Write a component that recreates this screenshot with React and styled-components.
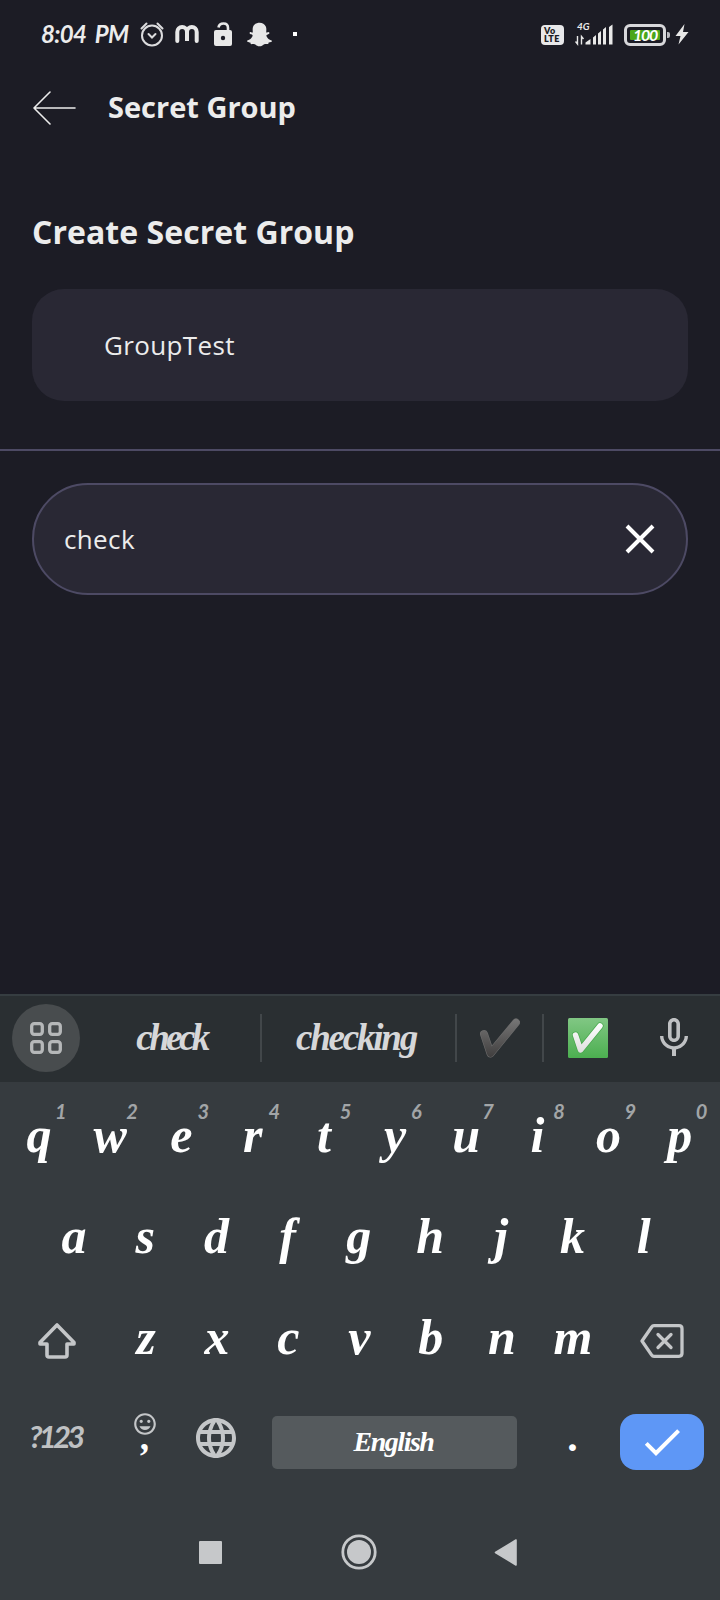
import React from "react";
import styled, { createGlobalStyle } from "styled-components";
import { FaSnapchatGhost } from "react-icons/fa";
import { MdMicNone, MdLanguage, MdTagFaces, MdCheck } from "react-icons/md";

const GlobalStyle = createGlobalStyle`
  * { box-sizing: border-box; }
  body { margin: 0; background: #1c1c25; }
`;

const script = `"Liberation Serif", serif`;
const slanted = `Lato, "Liberation Sans", sans-serif`;

const Screen = styled.div`
  width: 720px;
  height: 1600px;
  display: flex;
  flex-direction: column;
  overflow: hidden;
  background: #1c1c25;
  color: #ececec;
  font-family: "Open Sans", "Noto Sans", sans-serif;
  svg { display: block; flex: none; }
`;

const StatusBar = styled.header`
  height: 68px;
  padding: 0 31px 0 41px;
  display: flex;
  align-items: center;
  justify-content: space-between;
`;

const StatusGroup = styled.div`
  display: flex;
  align-items: center;
  gap: ${(p) => p.$gap}px;
`;

const Clock = styled.span`
  width: 84px;
  padding-bottom: 1px;
  font: italic 700 24px/30px ${slanted};
  letter-spacing: -0.7px;
  word-spacing: 4px;
  white-space: nowrap;
`;

const AppLogo = styled.span`
  margin-left: -4px;
`;

const Dot = styled.i`
  width: 4px;
  height: 4px;
  margin-left: 6px;
  background: #fff;
`;

const Volte = styled.div`
  width: 23px;
  height: 20px;
  margin-top: 2px;
  padding: 2px 0 0 3px;
  border-radius: 4px;
  background: #e8e8ea;
  color: #1c1c25;
  font: 800 9px/9px Lato, sans-serif;
  letter-spacing: 0.4px;
`;

const VolteLine = styled.span`
  display: block;
  height: 8px;
  line-height: 8px;
`;

const Signal = styled.div`
  position: relative;
  width: 38px;
  height: 24px;
`;

const Network = styled.span`
  position: absolute;
  left: 2px;
  top: -1px;
  font: italic 700 10px/10px ${slanted};
`;

const Battery = styled.div`
  display: flex;
  align-items: center;
  margin-top: 2px;
`;

const BatteryCase = styled.div`
  width: 42px;
  height: 22px;
  padding: 3px;
  border: 3px solid #d8d8db;
  border-radius: 6px;
`;

const BatteryLevel = styled.div`
  height: 10px;
  display: flex;
  align-items: center;
  justify-content: center;
  border-radius: 1px;
  background: #4aa61a;
  color: #fff;
  font: italic 700 16px/10px ${slanted};
  letter-spacing: -1.2px;
`;

const BatteryTip = styled.i`
  width: 3px;
  height: 6px;
  margin-left: 1px;
  border-radius: 0 2px 2px 0;
  background: #bbbbc0;
`;

const TitleBar = styled.div`
  height: 80px;
  padding-left: 33px;
  display: flex;
  align-items: center;
  gap: 32px;
`;

const Title = styled.h1`
  margin: 0;
  padding-bottom: 2px;
  font-size: 29px;
  line-height: 40px;
  font-weight: 700;
`;

const Form = styled.main`
  flex: 1;
`;

const Heading = styled.h2`
  margin: 60px 32px 33px;
  font-size: 32px;
  line-height: 48px;
  font-weight: 700;
  letter-spacing: 0.04px;
`;

const Field = styled.div`
  height: 112px;
  margin: 0 32px;
  padding: 0 ${(p) => (p.$outlined ? 31 : 0)}px 0 ${(p) => (p.$outlined ? 30 : 72)}px;
  display: flex;
  align-items: center;
  justify-content: space-between;
  border: ${(p) => (p.$outlined ? "2px solid #4d4a64" : "0")};
  border-radius: ${(p) => (p.$outlined ? 56 : 32)}px;
  background: #292834;
  font-size: 26px;
  letter-spacing: 0.36px;
`;

const FieldText = styled.span`
  white-space: nowrap;
`;

const Divider = styled.hr`
  height: 2px;
  margin: 48px 0 32px;
  border: 0;
  background: #4d4a64;
`;

const Keyboard = styled.section`
  height: 606px;
  border-top: 2px solid #363d41;
  background: #363b3f;
`;

const Strip = styled.div`
  height: 86px;
  padding: 0 4px 2px 12px;
  display: flex;
  align-items: center;
  background: #2a2f32;
`;

const MenuButton = styled.button`
  width: 68px;
  height: 68px;
  margin: 0 6px 0 0;
  padding: 0;
  display: grid;
  place-items: center;
  border: 0;
  border-radius: 50%;
  background: #484c4e;
`;

const Suggestion = styled.div`
  width: ${(p) => p.$width}px;
  height: 48px;
  padding-right: ${(p) => p.$nudge}px;
  display: flex;
  align-items: center;
  justify-content: center;
  border-right: 2px solid #42474a;
  color: #d6d7d9;
  font: italic 700 37px/48px ${script};
  letter-spacing: ${(p) => p.$tracking}px;
`;

const IconSlot = styled.div`
  width: ${(p) => p.$width}px;
  height: 48px;
  display: grid;
  place-items: center;
  border-right: ${(p) => (p.$divided ? 2 : 0)}px solid #42474a;
`;

const Keys = styled.div`
  padding-top: 6px;
`;

const KeyRow = styled.div`
  height: 101px;
  padding: 0 ${(p) => p.$inset || 4}px;
  display: flex;
  align-items: center;
`;

const Key = styled.div`
  position: relative;
  width: ${(p) => p.$width || 71.2}px;
  height: 101px;
  padding: ${(p) => (p.$icon ? "0 1px 0 0" : "0 1px 8px 0")};
  display: flex;
  flex-direction: column;
  align-items: center;
  justify-content: center;
  color: #fff;
  font: italic 700 50px/60px ${script};
`;

const Hint = styled.sup`
  position: absolute;
  left: 51px;
  top: 11px;
  color: #a2a5a7;
  font: italic 700 20px/24px ${slanted};
`;

const SymbolsKey = styled.div`
  width: 108px;
  padding: 0 0 11px 25px;
  color: #bfc1c3;
  font: italic 700 31px/40px ${slanted};
  letter-spacing: -3.7px;
`;

const CommaKey = styled.div`
  width: 66px;
  height: 101px;
  padding-top: 20px;
  display: flex;
  flex-direction: column;
  align-items: center;
  color: #c4c6c8;
`;

const Punctuation = styled.span`
  padding-left: 2px;
  color: #fff;
  font: italic 700 ${(p) => p.$size}px/${(p) => p.$line}px ${script};
`;

const GlobeKey = styled.div`
  width: 76px;
  padding-bottom: 8px;
  display: flex;
  justify-content: center;
  color: #c4c6c8;
`;

const SpaceKey = styled.div`
  width: 245px;
  height: 53px;
  margin: 2px 0 0 18px;
  padding: 0 2px 2px 0;
  display: grid;
  place-items: center;
  border-radius: 5px;
  background: #555a5d;
  color: #fff;
  font: italic 700 28px/40px ${script};
  letter-spacing: -1.5px;
`;

const PeriodKey = styled.div`
  width: 103px;
  padding: 0 0 9px 9px;
  display: flex;
  justify-content: center;
`;

const EnterKey = styled.button`
  width: 84px;
  height: 56px;
  padding: 0;
  display: grid;
  place-items: center;
  border: 0;
  border-radius: 16px;
  background: #5e97f6;
  color: #fff;
`;

const NavBar = styled.nav`
  height: 108px;
  padding: 12px 203px 0 199px;
  display: flex;
  align-items: center;
  justify-content: space-between;
`;

const HomeButton = styled.span`
  margin-left: 2px;
`;

const AlarmIcon = () => (
  <svg width="24" height="26" viewBox="0 0 24 26" fill="none" stroke="#dcdcde" strokeWidth="2" strokeLinecap="round">
    <circle cx="12" cy="14.5" r="10" />
    <path d="M1.5 7.5 6.5 2.5M22.5 7.5l-5-5M8.5 13l3.5 3.5 3.5-3.5" />
  </svg>
);

const ArchesLogo = () => (
  <svg width="24" height="18" viewBox="0 0 24 18" fill="none" stroke="#e8e8e8" strokeWidth="4" strokeLinecap="round">
    <path d="M2.3 16V7a4.85 5 0 0 1 9.7 0v9V7a4.85 5 0 0 1 9.7 0v9" />
  </svg>
);

const UnlockIcon = () => (
  <svg width="18" height="24" viewBox="0 0 18 24">
    <path d="M4.5 5.5C5 2.5 7 1.5 9.5 1.5c3 0 4.5 2 4.5 4.5v4" fill="none" stroke="#e8e8e8" strokeWidth="2.6" />
    <rect y="8" width="18" height="16" rx="2" fill="#e8e8e8" />
    <circle cx="9" cy="16" r="2.2" fill="#1c1c25" />
  </svg>
);

const BarsIcon = () => (
  <svg width="38" height="24" viewBox="0 0 38 24" fill="#e8e8e8">
    <path d="M10.5 22.5v-2l5-3.5v5.5zM18 22.5v-7l3-2.5v9.5zM23 22.5v-11l3-2.5v13.5zM28 22.5v-15l3-2.5v17.5zM34 22.5V5l3.5-2.5v20z" />
    <path d="M2.5 14v8L.5 19.5M6.5 22.5v-8l2 2.5" fill="none" stroke="#e8e8e8" strokeWidth="1.4" />
  </svg>
);

const BoltIcon = () => (
  <svg width="14" height="22" viewBox="0 0 14 22">
    <path d="M9.5 1 .5 13h5L3.5 21.5 13.5 9H8z" fill="#e8e8e8" />
  </svg>
);

const BackArrow = () => (
  <svg width="43" height="34" viewBox="0 0 43 34" fill="none" stroke="#ececec" strokeWidth="1.6">
    <path d="M17 1 1 17l16 16M1 17h41" strokeLinecap="round" strokeLinejoin="round" />
  </svg>
);

const ClearIcon = () => (
  <svg width="30" height="30" viewBox="0 0 30 30" stroke="#fff" strokeWidth="4">
    <path d="m2 2 26 26M28 2 2 28" />
  </svg>
);

const GridIcon = () => (
  <svg width="32" height="32" viewBox="0 0 32 32" fill="none" stroke="#b6b8b9" strokeWidth="3.3">
    {[1.7, 19.7].map((y) =>
      [1.7, 19.7].map((x) => <rect key={`${x}-${y}`} x={x} y={y} width="10.6" height="10.6" rx="2.5" />)
    )}
  </svg>
);

const HeavyCheck = () => (
  <svg width="40" height="40" viewBox="0 0 40 40" fill="none" strokeLinecap="round" strokeLinejoin="round">
    <defs>
      <linearGradient id="coal" gradientUnits="userSpaceOnUse" x1="0" y1="0" x2="0" y2="40">
        <stop offset="0" stopColor="#787878" />
        <stop offset="1" stopColor="#3f3d3d" />
      </linearGradient>
    </defs>
    <path d="M4 16 10.5 35.5 36 4.5" stroke="#6a6a6a" strokeWidth="8" />
    <path d="M4 16 10.5 35.5 36 4.5" stroke="url(#coal)" strokeWidth="6.8" />
  </svg>
);

const BoxedCheck = () => (
  <svg width="40" height="40" viewBox="0 0 40 40" strokeLinecap="round" strokeLinejoin="round">
    <defs>
      <linearGradient id="leaf" x1="0" y1="0" x2="0" y2="1">
        <stop offset="0" stopColor="#81c784" />
        <stop offset="1" stopColor="#4caf50" />
      </linearGradient>
      <linearGradient id="chalk" gradientUnits="userSpaceOnUse" x1="0" y1="5" x2="0" y2="35">
        <stop offset="0" stopColor="#fff" />
        <stop offset="1" stopColor="#dedede" />
      </linearGradient>
    </defs>
    <rect width="40" height="40" rx="1.5" fill="url(#leaf)" />
    <path d="M7.5 17 12.5 32 32 8" fill="none" stroke="#48a84d" strokeWidth="7" />
    <path d="M7.5 17 12.5 32 32 8" fill="none" stroke="url(#chalk)" strokeWidth="5.5" />
  </svg>
);

const ShiftIcon = () => (
  <svg width="40" height="38" viewBox="0 0 40 38" fill="none" stroke="#c4c6c8" strokeWidth="3.6" strokeLinejoin="round">
    <path d="M20 3 3 20.5V22h7v11q0 2 2 2h16q2 0 2-2V22h7v-1.5z" />
  </svg>
);

const BackspaceIcon = () => (
  <svg width="44" height="36" viewBox="0 0 44 36" fill="none" stroke="#c4c6c8" strokeWidth="3.3" strokeLinejoin="round">
    <path d="M14 2.7h25q3 0 3 3v24.6q0 3-3 3H14q-1.5 0-2.5-1.5L2 18l9.5-13.8Q12.5 2.7 14 2.7z" />
    <path d="m18 11.5 13 13M31 11.5l-13 13" strokeLinecap="round" />
  </svg>
);

const RecentsIcon = () => (
  <svg width="23" height="23"><rect width="23" height="23" rx="1" fill="#c6c8ca" /></svg>
);

const HomeIcon = () => (
  <svg width="36" height="36" viewBox="0 0 36 36">
    <circle cx="18" cy="18" r="16.2" fill="none" stroke="#c6c8ca" strokeWidth="2.8" />
    <circle cx="18" cy="18" r="12" fill="#c6c8ca" />
  </svg>
);

const BackIcon = () => (
  <svg width="23" height="27" viewBox="0 0 23 27">
    <path d="M22 1v25L1.5 13.5z" fill="#c6c8ca" stroke="#c6c8ca" strokeWidth="1.6" strokeLinejoin="round" />
  </svg>
);

export default function App() {
  return (
    <Screen>
      <GlobalStyle />
      <StatusBar>
        <StatusGroup $gap={15}>
          <Clock>8:04 PM</Clock>
          <AlarmIcon />
          <AppLogo><ArchesLogo /></AppLogo>
          <UnlockIcon />
          <FaSnapchatGhost size={25} color="#e8e8e8" />
          <Dot />
        </StatusGroup>
        <StatusGroup $gap={11}>
          <Volte>
            <VolteLine>Vo</VolteLine>
            <VolteLine>LTE</VolteLine>
          </Volte>
          <Signal>
            <Network>4G</Network>
            <BarsIcon />
          </Signal>
          <StatusGroup $gap={5}>
            <Battery>
              <BatteryCase><BatteryLevel>100</BatteryLevel></BatteryCase>
              <BatteryTip />
            </Battery>
            <BoltIcon />
          </StatusGroup>
        </StatusGroup>
      </StatusBar>
      <TitleBar>
        <BackArrow />
        <Title>Secret Group</Title>
      </TitleBar>
      <Form>
        <Heading>Create Secret Group</Heading>
        <Field><FieldText>GroupTest</FieldText></Field>
        <Divider />
        <Field $outlined>
          <FieldText>check</FieldText>
          <ClearIcon />
        </Field>
      </Form>
      <Keyboard>
        <Strip>
          <MenuButton><GridIcon /></MenuButton>
          <Suggestion $width={176} $tracking={-3.6} $nudge={3}>check</Suggestion>
          <Suggestion $width={195} $tracking={-2.2} $nudge={5}>checking</Suggestion>
          <IconSlot $width={87} $divided><HeavyCheck /></IconSlot>
          <IconSlot $width={87}><BoxedCheck /></IconSlot>
          <IconSlot $width={85}><MdMicNone size={48} color="#bfc1c3" /></IconSlot>
        </Strip>
        <Keys>
          <KeyRow>
            {[..."qwertyuiop"].map((letter, i) => (
              <Key key={letter}>{letter}<Hint>{(i + 1) % 10}</Hint></Key>
            ))}
          </KeyRow>
          <KeyRow $inset={39}>
            {[..."asdfghjkl"].map((letter) => <Key key={letter}>{letter}</Key>)}
          </KeyRow>
          <KeyRow>
            <Key $width={106.8} $icon><ShiftIcon /></Key>
            {[..."zxcvbnm"].map((letter) => <Key key={letter}>{letter}</Key>)}
            <Key $width={106.8} $icon><BackspaceIcon /></Key>
          </KeyRow>
          <KeyRow>
            <SymbolsKey>?123</SymbolsKey>
            <CommaKey>
              <MdTagFaces size={26} />
              <Punctuation $size={38} $line={0}>,</Punctuation>
            </CommaKey>
            <GlobeKey><MdLanguage size={48} /></GlobeKey>
            <SpaceKey>English</SpaceKey>
            <PeriodKey><Punctuation $size={42} $line={24}>.</Punctuation></PeriodKey>
            <EnterKey><MdCheck size={48} /></EnterKey>
          </KeyRow>
        </Keys>
        <NavBar>
          <RecentsIcon />
          <HomeButton><HomeIcon /></HomeButton>
          <BackIcon />
        </NavBar>
      </Keyboard>
    </Screen>
  );
}
